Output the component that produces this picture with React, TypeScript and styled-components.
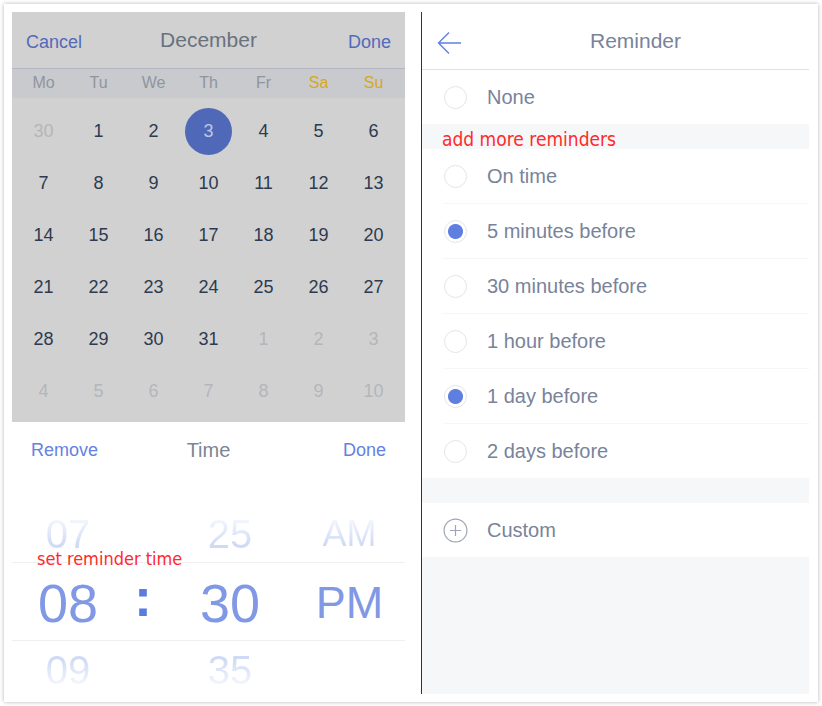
import React, { useState } from "react";
import styled, { createGlobalStyle } from "styled-components";

const GlobalStyle = createGlobalStyle`
  *, *::before, *::after { box-sizing: border-box; }
  body {
    margin: 0;
    background: #fff;
    font-family: "Liberation Sans", Arial, sans-serif;
    color: #79839a;
  }
  button {
    margin: 0;
    padding: 0;
    border: 0;
    background: none;
    font: inherit;
    color: inherit;
    cursor: pointer;
  }
`;

const Card = styled.main`
  display: grid;
  grid-template-columns: 393fr 388fr;
  column-gap: 16px;
  margin: 4px;
  padding: 8px 9px 8px 8px;
  background: #fff;
  box-shadow: 0 0 4px rgba(0, 0, 0, 0.3);
`;

const Screen = styled.section`
  display: flex;
  flex-direction: column;
  min-width: 0;
`;

const CalendarPanel = styled.div`
  background: #d1d1d1;
`;

const CalendarHeader = styled.header`
  display: grid;
  grid-template-columns: 1fr auto 1fr;
  align-items: center;
  height: 57px;
  padding: 3px 14px 0;
  border-bottom: 1px solid #b5b7c3;
`;

const Title = styled.h1<{ $tone?: string }>`
  margin: 0 0 4px;
  font-size: 21px;
  line-height: 24px;
  font-weight: 400;
  color: ${(p) => p.$tone ?? "#79839a"};
`;

const TextButton = styled.button<{ $end?: boolean; $tone: string }>`
  justify-self: ${(p) => (p.$end ? "end" : "start")};
  font-size: 18px;
  line-height: 24px;
  color: ${(p) => p.$tone};
`;

const MonthTable = styled.table`
  width: 100%;
  border-collapse: collapse;
  table-layout: fixed;
`;

const WeekRow = styled.tr`
  height: 29px;
  background: #c8cacd;
`;

const Weekday = styled.th<{ $weekend: boolean }>`
  padding: 0 0 2px;
  font-size: 16px;
  font-weight: 400;
  line-height: 24px;
  color: ${(p) => (p.$weekend ? "#d7a820" : "#90959d")};
`;

const Edge = styled.col`
  width: 4px;
`;

const Spacer = styled.tr`
  height: 7px;
`;

const DayRow = styled.tr`
  height: 52px;
`;

const DayCell = styled.td`
  padding: 0;
  text-align: center;
`;

const Day = styled.button<{ $muted: boolean; $selected: boolean }>`
  width: 47px;
  height: 47px;
  border-radius: 50%;
  font-size: 18px;
  line-height: 24px;
  vertical-align: middle;
  color: ${(p) => (p.$selected ? "#bcc7e6" : p.$muted ? "#b4b6b9" : "#2d3a50")};
  background: ${(p) => (p.$selected ? "#4f68b8" : "transparent")};
`;

const CalendarFoot = styled.div`
  height: 5px;
`;

const TimeHeader = styled.header`
  display: grid;
  grid-template-columns: 1fr auto 1fr;
  align-items: center;
  height: 56px;
  padding: 0 19px;
`;

const TimeTitle = styled.h2`
  margin: 0;
  font-size: 20px;
  line-height: 24px;
  font-weight: 400;
  color: #7b8594;
`;

const Wheel = styled.div`
  position: relative;
  flex: 1;
  display: flex;
  flex-direction: column;
`;

const WheelRow = styled.div<{ $place: "above" | "current" | "below" }>`
  display: grid;
  grid-template-columns: 112fr 38fr 136fr 103fr 4fr;
  align-items: center;
  justify-items: center;
  height: ${(p) => ({ above: 84, current: 79, below: 53 })[p.$place]}px;
  padding-top: ${(p) => ({ above: 28, current: 2, below: 4 })[p.$place]}px;
  border: 0 solid #eeeff2;
  border-width: ${(p) => (p.$place === "current" ? "1px 0" : "0")};
`;

const Faded = styled.button<{ $below?: boolean; $period?: boolean }>`
  font-size: ${(p) => (p.$period ? 36 : 40)}px;
  line-height: 36px;
  color: transparent;
  background: linear-gradient(
    ${(p) => (p.$below ? "to top" : "to bottom")},
    #f3f6fd 10%,
    #cfdaf5 80%
  );
  background-clip: text;
  -webkit-background-clip: text;
`;

const Current = styled.span<{ $period?: boolean }>`
  font-size: ${(p) => (p.$period ? 45 : 54)}px;
  line-height: 60px;
  color: #8199e5;
`;

const Colon = styled.span`
  margin-bottom: 12px;
  font-size: 54px;
  font-weight: 700;
  line-height: 60px;
  color: #5b7be0;
`;

const Note = styled.p`
  margin: 0;
  font-family: "DejaVu Sans Condensed", "Noto Sans", sans-serif;
  font-size: 19px;
  line-height: 24px;
  white-space: nowrap;
  color: #ff2a2a;
`;

const FloatingNote = styled(Note)`
  position: absolute;
  left: 25px;
  top: 69px;
  font-size: 18px;
`;

const ReminderScreen = styled(Screen)`
  border-left: 1px solid #33343a;
  background: #f6f7f9;
`;

const ReminderHeader = styled.header`
  display: grid;
  grid-template-columns: 154fr auto 114fr;
  align-items: center;
  height: 58px;
  padding: 4px 14px 0;
  background: #fff;
  border-bottom: 1px solid #dfe1e4;
`;

const BackButton = styled.button`
  justify-self: start;
  display: flex;
  width: 26px;
  height: 24px;
  color: #5f80e2;
`;

const Group = styled.div`
  padding-left: 21px;
  background: #fff;
`;

const Option = styled.label<{ $line: boolean }>`
  display: flex;
  align-items: center;
  gap: 20px;
  height: ${(p) => (p.$line ? 55 : 54)}px;
  padding-left: 1px;
  border-bottom: ${(p) => (p.$line ? 1 : 0)}px solid #f5f6f8;
  font-size: 20px;
  line-height: 24px;
  cursor: pointer;
`;

const Tick = styled.input`
  appearance: none;
  flex: none;
  width: 23px;
  height: 23px;
  margin: 0;
  border: 1px solid #e3e5e9;
  border-radius: 50%;
  background: #fff;
  &:checked {
    background: radial-gradient(circle, #5f7fe0 7px, #fff 8px);
  }
`;

const Divider = styled.div<{ $note?: boolean }>`
  height: 25px;
  padding: 3px 20px 0;
`;

const CustomButton = styled.button`
  display: flex;
  align-items: center;
  gap: 19px;
  width: 100%;
  height: 54px;
  font-size: 20px;
  line-height: 24px;
`;

const weekdays = ["Mo", "Tu", "We", "Th", "Fr", "Sa", "Su"];
const weeks = Array.from({ length: 6 }, (_, w) =>
  Array.from({ length: 7 }, (_, d) => {
    const n = w * 7 + d;
    return n === 0 ? { day: 30, muted: true } : n > 31 ? { day: n - 31, muted: true } : { day: n, muted: false };
  })
);
const reminders = [
  "On time",
  "5 minutes before",
  "30 minutes before",
  "1 hour before",
  "1 day before",
  "2 days before",
];

function ArrowLeft() {
  return (
    <svg width="26" height="24" viewBox="0 0 26 24" fill="none" stroke="currentColor" strokeWidth="1.4" aria-hidden="true">
      <path d="M25 12H2.5M13 1.5L2.5 12L13 22.5" />
    </svg>
  );
}

function PlusCircle() {
  return (
    <svg width="25" height="25" viewBox="0 0 25 25" fill="none" stroke="#9ea6b5" strokeWidth="1.2" aria-hidden="true">
      <circle cx="12.5" cy="12.5" r="11.4" />
      <path d="M12.5 7v11M7 12.5h11" />
    </svg>
  );
}

function Calendar() {
  const [selected, setSelected] = useState(3);
  return (
    <CalendarPanel>
      <CalendarHeader>
        <TextButton $tone="#526abb">Cancel</TextButton>
        <Title $tone="#69717e">December</Title>
        <TextButton $end $tone="#526abb">Done</TextButton>
      </CalendarHeader>
      <MonthTable>
        <colgroup>
          <Edge />
          {weekdays.map((d) => <col key={d} />)}
          <Edge />
        </colgroup>
        <thead>
          <WeekRow>
            <td />
            {weekdays.map((d, i) => (
              <Weekday key={d} scope="col" $weekend={i > 4}>{d}</Weekday>
            ))}
            <td />
          </WeekRow>
        </thead>
        <tbody>
          <Spacer><td colSpan={9} /></Spacer>
          {weeks.map((week, w) => (
            <DayRow key={w}>
              <td />
              {week.map(({ day, muted }, d) => (
                <DayCell key={d}>
                  <Day
                    $muted={muted}
                    $selected={!muted && day === selected}
                    onClick={() => !muted && setSelected(day)}
                  >
                    {day}
                  </Day>
                </DayCell>
              ))}
              <td />
            </DayRow>
          ))}
        </tbody>
      </MonthTable>
      <CalendarFoot />
    </CalendarPanel>
  );
}

function TimePicker() {
  return (
    <>
      <TimeHeader>
        <TextButton $tone="#6482e2">Remove</TextButton>
        <TimeTitle>Time</TimeTitle>
        <TextButton $end $tone="#6482e2">Done</TextButton>
      </TimeHeader>
      <Wheel>
        <WheelRow $place="above">
          <Faded>07</Faded>
          <span />
          <Faded>25</Faded>
          <Faded $period>AM</Faded>
        </WheelRow>
        <WheelRow $place="current">
          <Current>08</Current>
          <Colon>:</Colon>
          <Current>30</Current>
          <Current $period>PM</Current>
        </WheelRow>
        <WheelRow $place="below">
          <Faded $below>09</Faded>
          <span />
          <Faded $below>35</Faded>
        </WheelRow>
        <FloatingNote>set reminder time</FloatingNote>
      </Wheel>
    </>
  );
}

function Reminders() {
  const [chosen, setChosen] = useState<string[]>(["5 minutes before", "1 day before"]);
  const toggle = (name: string) =>
    setChosen((c) => (c.includes(name) ? c.filter((n) => n !== name) : [...c, name]));
  return (
    <ReminderScreen>
      <ReminderHeader>
        <BackButton aria-label="Back"><ArrowLeft /></BackButton>
        <Title>Reminder</Title>
      </ReminderHeader>
      <Group>
        <Option $line={false}>
          <Tick type="checkbox" checked={chosen.length === 0} onChange={() => setChosen([])} />
          None
        </Option>
      </Group>
      <Divider>
        <Note>add more reminders</Note>
      </Divider>
      <Group>
        {reminders.map((name, i) => (
          <Option key={name} $line={i < reminders.length - 1}>
            <Tick type="checkbox" checked={chosen.includes(name)} onChange={() => toggle(name)} />
            {name}
          </Option>
        ))}
      </Group>
      <Divider />
      <Group>
        <CustomButton>
          <PlusCircle />
          Custom
        </CustomButton>
      </Group>
    </ReminderScreen>
  );
}

export default function App() {
  return (
    <>
      <GlobalStyle />
      <Card>
        <Screen>
          <Calendar />
          <TimePicker />
        </Screen>
        <Reminders />
      </Card>
    </>
  );
}
